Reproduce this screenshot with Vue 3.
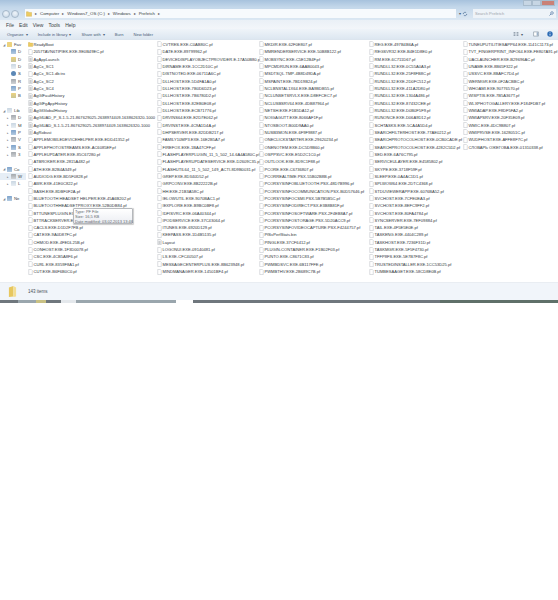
<script setup>
// the sidebar is cut narrow in this window, only the first letters show
const sidebarGroups = [
  [
    { name: 'Fav', icon: 'star', head: true },
    { name: 'D', icon: 'blue' },
    { name: 'D', icon: 'yellow' },
    { name: 'D', icon: 'pale' },
    { name: 'S', icon: 'cloud' },
    { name: 'R', icon: 'gray' },
    { name: 'P', icon: 'blue' },
    { name: 'B', icon: 'yellow' },
  ],
  [
    { name: 'Lib', icon: 'pale', head: true },
    { name: 'D', icon: 'gray', sub: true },
    { name: 'M', icon: 'pale', sub: true },
    { name: 'P', icon: 'blue', sub: true },
    { name: 'V', icon: 'gray', sub: true },
    { name: 'S', icon: 'blue', sub: true },
    { name: '3', icon: 'gray', sub: true },
  ],
  [
    { name: 'Co', icon: 'blue', head: true },
    { name: 'W', icon: 'gray', sub: true, selected: true },
    { name: 'L', icon: 'pale', sub: true },
  ],
  [{ name: 'Ne', icon: 'blue', head: true }],
]

const folders = ['ReadyBoot']
const dataFiles = [
  'AgAppLaunch', 'AgCx_SC1', 'AgCx_SC2', 'AgCx_SC4', 'AgGlFaultHistory', 'AgGlFgAppHistory', 'AgGlGlobalHistory',
  'AgGlUAD_P_S-1-5-21-867629025-2638974409-1638626320-1000', 'AgGlUAD_S-1-5-21-867629025-2638974409-1638626320-1000',
  'AgRobust', 'Layout',
]

const names = [
  'ReadyBoot', '2057TAVN6TIPIEK.EXE-9E0B49EC.pf', 'AgAppLaunch', 'AgCx_SC1', 'AgCx_SC1.db.trx', 'AgCx_SC2', 'AgCx_SC4',
  'AgGlFaultHistory', 'AgGlFgAppHistory', 'AgGlGlobalHistory',
  'AgGlUAD_P_S-1-5-21-867629025-2638974409-1638626320-1000', 'AgGlUAD_S-1-5-21-867629025-2638974409-1638626320-1000',
  'AgRobust', 'APPLEMOBILEDEVICEHELPER.EXE-EDD41352.pf', 'APPLEPHOTOSTREAMS.EXE-AC6085EF.pf',
  'APPLEUPDATER.EXE-85C67280.pf', 'ATBROKER.EXE-2815A482.pf', 'ATH.EXE-B2B4A349.pf', 'AUDIODG.EXE-BD5F0828.pf',
  'AWK.EXE-41E0C822.pf', 'BASH.EXE-8DBF0F2A.pf', 'BLUETOOTH HEADSET HELPER.EXE-45A6B202.pf',
  'BLUETOOTHHEADSETPROXY.EXE-52B0DB84.pf', 'BTTUNESPLUGIN.EX', 'BTTRACKSERVER.EX',
  'CACLS.EXE-D1D2F7FB.pf', 'CAT.EXE-9A0D87FC.pf', 'CHMOD.EXE-4FEDL25B.pf', 'CONHOST.EXE-1F3D0078.pf',
  'CSC.EXE-4CB5A8F6.pf', 'CURL.EXE-8359F8A1.pf', 'CUT.EXE-B6F6B0C0.pf',

  'CVTRES.EXE-C0AB80C.pf', 'DATE.EXE-89799962.pf', 'DEVICEDISPLAYOBJECTPROVIDER.E-17A50B80.pf',
  'DIRNAME.EXE-1CC2D10C.pf', 'DISTNOTED.EXE-06711A6C.pf', 'DLLHOST.EXE-5D4FA1A0.pf', 'DLLHOST.EXE-7B0D6D23.pf',
  'DLLHOST.EXE-7B6780D2.pf', 'DLLHOST.EXE-82EB0E08.pf', 'DLLHOST.EXE-ECB71776.pf', 'DRVINS64.EXE-E2D7E062.pf',
  'DRVINST.EXE-4C9A1D4A.pf', 'DHPSERVER.EXE-82DDB217.pf', 'FAMILY10MP3.EXE-16E2B5A7.pf', 'FIREFOX.EXE-1BA47CFF.pf',
  'FLASHPLAYERPLUGIN_11_5_502_14-6A4A580C.pf', 'FLASHPLAYERUPDATESERVICE.EXE-D2609C35.pf',
  'FLASHUTIL64_11_5_502_149_ACTI-8D9B0031.pf', 'GREP.EXE-8D340D52.pf', 'GRPCONV.EXE-8B22222B.pf', 'HH.EXE-21B3A58C.pf',
  'IELOWUTIL.EXE-9070BAC1.pf', 'IEXPLORE.EXE-B9BC0BF8.pf', 'IDFISVRC.EXE-06A40344.pf', 'IPODSERVICE.EXE-37C43064.pf',
  'ITUNES.EXE-6920D129.pf', 'KEEPASS.EXE-1D4B5135.pf', 'Layout', 'LOGONUI.EXE-09140481.pf', 'LS.EXE-CFC40507.pf',
  'MESSAGECENTERPLUS.EXE-8B623948.pf', 'MINDMANAGER.EXE-14501BF4.pf',

  'MKDIR.EXE-62F0E807.pf', 'MMRENDERSERVICE.EXE-50B8B122.pf', 'MOBSYNC.EXE-C5E12B4F.pf', 'MPCMDRUN.EXE-6AAB0043.pf',
  'MSDTSQL.TMP-4B8D49DA.pf', 'MSPAINT.EXE-7BD19B24.pf', 'NCLBNSTAL1X64.EXE-BA9BDB55.pf', 'NCLUNSETSRVLX.EXE-D8EFCEC7.pf',
  'NCLUSBSRV64.EXE-4DB87964.pf', 'NETSH.EXE-F1B5DA12.pf', 'NOIGAGUTT.EXE-8066AF1F.pf', 'NTOSBOOT-B00D9AA0.pf',
  'NUSB3MON.EXE-6F9F9887.pf', 'ONECLICKSTARTER.EXE-29620234.pf', 'ONENOTEM.EXE-DC5D9B60.pf', 'OSPPSVC.EXE-E5D2C1C0.pf',
  'OUTLOOK.EXE-8D9C1F88.pf', 'PCORE.EXE-C6736807.pf', 'PCORREALTIME.PSX-55B02B8B.pf',
  'PCORSYSINFOBLUETOOTH.PSX-48D7B996.pf', 'PCORSYSINFOCOMMUNICATION.PSX-B0D57646.pf', 'PCORSYSINFOCSMI.PSX-5B7B5B5C.pf',
  'PCORSYSINFODIRECT.PSX-E3B8B81F.pf', 'PCORSYSINFOSOFTWARE.PSX-2F4EB8A7.pf', 'PCORSYSINFOSTORAGE.PSX-5D20ACC9.pf',
  'PCORSYSINFOVIDEOCAPTURE.PSX-F4244757.pf', 'PfSvPerfStats.bin', 'PINGLEXE-37CF6412.pf',
  'PLUGIN-CONTAINER.EXE-F1B02F03.pf', 'PUNTO.EXE-C8671C83.pf', 'PWMBDSVC.EXE-6B117FFE.pf', 'PWMBTHV.EXE-2B689C7B.pf',

  'REG.EXE-497B4B6A.pf', 'REGSVR32.EXE-B4E1D8E0.pf', 'RM.EXE-6C711D67.pf', 'RUNDLL32.EXE-0C55A0A3.pf',
  'RUNDLL32.EXE-25F8FB8C.pf', 'RUNDLL32.EXE-2D0FC512.pf', 'RUNDLL32.EXE-411A2D80.pf', 'RUNDLL32.EXE-1304A486.pf',
  'RUNDLL32.EXE-87432CEE.pf', 'RUNDLL32.EXE-D0B0F5F9.pf', 'RUNONCE.EXE-D06A9D12.pf', 'SCHTASKS.EXE-5CA4A5D4.pf',
  'SEARCHFILTERHOST.EXE-77AE0212.pf', 'SEARCHPROTOCOLHOST.EXE-0CB0CADE.pf', 'SEARCHPROTOCOLHOST.EXE-4282C5D2.pf',
  'SED.EXE-6A76C795.pf', 'SERVICEULAYER.EXE-E4585802.pf', 'SKYPE.EXE-3718F59F.pf', 'SLEEP.EXE-0A4AC1D1.pf',
  'SPLWOW64.EXE-2DTC4368.pf', 'STDUVIEWERAPP.EXE-6076BA52.pf', 'SVCHOST.EXE-7CFE0EA3.pf', 'SVCHOST.EXE-8EFC9FF2.pf',
  'SVCHOST.EXE-80FA4784.pf', 'SYNCSERVER.EXE-7EF09884.pf', 'TAIL.EXE-4F5E5E0E.pf', 'TASKENG.EXE-4404C289.pf',
  'TASKHOST.EXE-7236F31D.pf', 'TASKMGR.EXE-5F5F4730.pf', 'TFFP8FS.EXE-5E7B7F8C.pf',
  'TRUSTEDINSTALLER.EXE-1CC53D25.pf', 'TUMBESAAGET.EXE-58CD8E0B.pf',

  'TUNEUPUTILITIESAPP64.EXE-1141C1173.pf', 'TVT_FINGERPRINT_INFO64.EXE-FE807A91.pf', 'UACLAUNCHER.EXE-B29696AC.pf',
  'UNAME.EXE-8B65F322.pf', 'USSVC.EXE-8BAFC7D4.pf', 'WERMGR.EXE-0F2ACBBC.pf', 'WHOAMI.EXE-90776570.pf',
  'WISPTIS.EXE-7B5A367T.pf', 'WLXPHOTOGALLERY.EXE-F184FDB7.pf', 'WMIADAP.EXE-F8DF5FA2.pf', 'WMIAPSRV.EXE-20F35E09.pf',
  'WMIC.EXE-4DC9B807.pf', 'WMIPRVSE.EXE-1628051C.pf', 'WUDFHOST.EXE-AFFE8F7C.pf', 'СЛОВАРЬ ОЖЕГОВА.EXE-01310338.pf',
]

const iconFor = (name) => {
  if (folders.includes(name)) return '#ic-folder'
  if (dataFiles.includes(name)) return '#ic-data'
  return '#ic-file'
}

const crumbs = ['Computer', 'Windows7_OS (C:)', 'Windows', 'Prefetch']
const menus = ['File', 'Edit', 'View', 'Tools', 'Help']
const actions = [
  { label: 'Organize', arrow: true },
  { label: 'Include in library', arrow: true },
  { label: 'Share with', arrow: true },
  { label: 'Burn' },
  { label: 'New folder' },
]
</script>

<template>
  <div class="explorer">
    <svg class="defs" width="0" height="0" aria-hidden="true">
      <symbol id="ic-file" viewBox="0 0 10 12">
        <path d="M1.5.8h5l2 2v8.4h-7z" fill="#fff" stroke="#b6bac0" />
      </symbol>
      <symbol id="ic-data" viewBox="0 0 10 12">
        <path d="M1.5.8h5l2 2v8.4h-7z" fill="#f4f5f6" stroke="#b0b4b9" />
        <path d="M3 5h4M3 7h4M3 9h4" stroke="#a2a7ab" />
      </symbol>
      <symbol id="ic-folder" viewBox="0 0 10 12">
        <path d="M.5 3h3.4l1 1.2h4.6v6.6H.5z" fill="#eccb62" stroke="#c9a545" stroke-width=".6" />
      </symbol>
    </svg>

    <div class="titlebar">
      <div class="window-btns">
        <span class="wbtn"></span>
        <span class="wbtn"></span>
        <span class="wbtn close"></span>
      </div>
    </div>

    <div class="addressrow">
      <div class="nav">
        <span class="nav-btn"></span>
        <span class="nav-btn"></span>
      </div>
      <div class="address">
        <svg class="addr-icon" viewBox="0 0 10 12"><use href="#ic-folder" /></svg>
        <template v-for="c in crumbs" :key="c">
          <span class="sep">▸</span>
          <span class="crumb">{{ c }}</span>
        </template>
        <span class="sep">▸</span>
      </div>
      <div class="refresh">
        <span class="dd">▾</span>
        <svg viewBox="0 0 10 10" width="6" height="6">
          <path d="M2 5a3 3 0 0 1 5-2M8 5a3 3 0 0 1-5 2" fill="none" stroke="#4b6d92" stroke-width="1.2" />
        </svg>
      </div>
      <div class="search">
        <span>Search Prefetch</span>
        <svg viewBox="0 0 10 10" width="5" height="5">
          <circle cx="6" cy="4" r="2.6" fill="none" stroke="#3f6a9b" stroke-width="1.2" />
          <path d="M4 6L1 9" stroke="#3f6a9b" stroke-width="1.4" />
        </svg>
      </div>
    </div>

    <div class="menubar">
      <span v-for="m in menus" :key="m">{{ m }}</span>
    </div>

    <div class="toolbar">
      <span v-for="a in actions" :key="a.label" class="action">
        {{ a.label }}<i v-if="a.arrow">▾</i>
      </span>
      <div class="tool-icons">
        <svg viewBox="0 0 10 10" width="6" height="6">
          <path d="M1 2h3v2H1zM6 2h3v2H6zM1 6h3v2H1zM6 6h3v2H6z" fill="#7d8b99" />
        </svg>
        <span class="dd">▾</span>
        <svg class="pane" viewBox="0 0 10 10" width="6" height="6">
          <path d="M1 1.5h8v7H1z" fill="#fff" stroke="#7d8b99" />
          <path d="M6 2h2.500v6H6z" fill="#9db3c9" />
        </svg>
        <svg viewBox="0 0 10 10" width="6" height="6">
          <circle cx="5" cy="5" r="4.500" fill="#2d6cb5" />
          <path d="M5 4.500v3M5 2.200v1" stroke="#fff" stroke-width="1.300" />
        </svg>
      </div>
    </div>

    <div class="main">
      <nav class="sidebar">
        <ul v-for="(group, g) in sidebarGroups" :key="g" class="side-group">
          <li
            v-for="(item, i) in group"
            :key="i"
            class="side-item"
            :class="{ head: item.head, sub: item.sub, selected: item.selected }"
          >
            <i v-if="item.head || item.sub" class="chev">{{ item.head ? '◢' : '▸' }}</i>
            <b class="side-icon" :class="item.icon"></b>
            <span>{{ item.name }}</span>
          </li>
        </ul>
      </nav>

      <div class="files">
        <div v-for="n in names" :key="n" class="file">
          <svg class="file-icon" viewBox="0 0 10 12"><use :href="iconFor(n)" /></svg>
          <span>{{ n }}</span>
        </div>
      </div>

      <div class="tooltip">
        <div>Type: PF File</div>
        <div>Size: 16,5 KB</div>
        <div>Date modified: 03.02.2013 13:46</div>
      </div>
    </div>

    <div class="statusbar">
      <svg class="status-folder" viewBox="0 0 10 14">
        <path d="M1 2.500L6 1v11.500L1 13z" fill="#e7c75f" />
        <path d="M6 1l3 1.500v10l-3 .5z" fill="#f3de94" />
      </svg>
      <span>143 items</span>
    </div>

    <div class="taskbar">
      <i class="t1"></i><i class="t2"></i><i class="t3"></i><i class="t1 w1"></i><i class="t4"></i><i class="t2 w2"></i>
      <i class="t5"></i><i class="t1 grow"></i><i class="t6"></i>
    </div>
  </div>
</template>

<style scoped>
.explorer {
  width: 558px;
  font-family: "Liberation Sans", Arial, sans-serif;
  color: #3a3f45;
  background: #fff;
}

.defs {
  position: absolute;
}

.titlebar {
  height: 7px;
  display: flex;
  justify-content: flex-end;
  background: linear-gradient(#a7c2dd, #c3d7ea);
}

.window-btns {
  display: flex;
  margin-right: 3px;
}

.wbtn {
  width: 9px;
  height: 6px;
  background: #c7d6e4;
  border: 0.5px solid #a9bccd;
  box-sizing: border-box;
}

.wbtn.close {
  width: 14px;
  background: #c98177;
}

.addressrow {
  height: 13px;
  display: flex;
  align-items: center;
  background: linear-gradient(#c3d7ea, #dce8f3);
  font-size: 4.400px;
}

.nav {
  display: flex;
  gap: 1px;
  width: 25px;
  padding-left: 2px;
  box-sizing: border-box;
}

.nav-btn {
  width: 8px;
  height: 8px;
  border-radius: 50%;
  border: 0.6px solid #a5b8ca;
  box-sizing: border-box;
  background: radial-gradient(circle at 50% 35%, #eef4fa, #c8d7e5);
}

.address {
  width: 431px;
  height: 9px;
  display: flex;
  align-items: center;
  gap: 3px;
  padding-left: 1px;
  box-sizing: border-box;
  background: #f7fafd;
}

.addr-icon {
  width: 6px;
  height: 7px;
}

.sep {
  font-size: 3.500px;
  color: #555;
}

.refresh {
  width: 17px;
  display: flex;
  align-items: center;
  gap: 1px;
  padding-left: 3px;
  box-sizing: border-box;
}

.dd {
  font-size: 4px;
  color: #4c5a68;
}

.search {
  width: 83px;
  height: 9px;
  display: flex;
  align-items: center;
  justify-content: space-between;
  padding: 0 2px;
  box-sizing: border-box;
  background: #eef3f8;
  color: #a0a6ad;
  font-size: 4.100px;
}

.menubar {
  height: 9px;
  display: flex;
  align-items: center;
  gap: 5px;
  padding-left: 6px;
  background: linear-gradient(#eaf0f6, #f3f6fa);
  font-size: 5px;
}

.toolbar {
  height: 11px;
  display: flex;
  align-items: center;
  gap: 10px;
  padding-left: 7px;
  background: linear-gradient(#eff4f9, #dde7f1);
  border-bottom: 0.5px solid #dce5ee;
  box-sizing: border-box;
  font-size: 4.100px;
  color: #4a6079;
}

.action i {
  font-style: normal;
  font-size: 3.500px;
  margin-left: 2px;
}

.tool-icons {
  margin-left: auto;
  display: flex;
  align-items: center;
  gap: 2px;
  padding-right: 5px;
}

.pane {
  margin: 0 6px 0 8px;
}

.main {
  position: relative;
  display: flex;
  height: 242px;
  overflow: hidden;
}

.sidebar {
  width: 26px;
  flex: none;
  padding-top: 1px;
  box-sizing: border-box;
}

.side-group {
  list-style: none;
  margin: 0 0 7.330px;
  padding: 0;
}

.side-item {
  height: 7.330px;
  display: flex;
  align-items: center;
  padding-left: 11px;
  font-size: 4.300px;
  white-space: nowrap;
}

.side-item.head {
  padding-left: 3px;
}

.side-item.sub {
  padding-left: 7px;
}

.side-item.selected {
  background: #e6eef6;
}

.chev {
  width: 4px;
  flex: none;
  font-style: normal;
  font-size: 3px;
  color: #7a838b;
}

.side-icon {
  width: 5px;
  height: 5px;
  flex: none;
  margin-right: 2px;
  border-radius: 0.5px;
}

.side-icon.star {
  background: #ecd27e;
}

.side-icon.blue {
  background: linear-gradient(#7ea3cb, #b4cbe1);
}

.side-icon.yellow {
  background: linear-gradient(#ecd27e, #c9c596);
}

.side-icon.pale {
  background: linear-gradient(#c9d6e2, #e8eef3);
}

.side-icon.cloud {
  background: #5c88b6;
  border-radius: 50%;
}

.side-icon.gray {
  background: linear-gradient(#a3a8ad, #d0d3d6);
}

.files {
  flex: 1;
  display: grid;
  grid-auto-flow: column;
  grid-template-rows: repeat(32, 7.330px);
  grid-template-columns: 129px 102px 110px 94px 1fr;
  padding: 0.800px 0 0 2px;
  font-size: 4.100px;
  color: #33383e;
}

.file {
  display: flex;
  align-items: center;
  gap: 0.500px;
  white-space: nowrap;
}

.file-icon {
  width: 5px;
  height: 6px;
  flex: none;
}

.tooltip {
  position: absolute;
  left: 73px;
  top: 168px;
  width: 60px;
  height: 16px;
  padding: 0 1px;
  box-sizing: border-box;
  border: 0.5px solid #b5b8bc;
  border-radius: 1px;
  background: linear-gradient(#fff, #eceef3);
  box-shadow: 0.5px 0.5px 1px rgba(0, 0, 0, 0.2);
  font-size: 4px;
  line-height: 5.200px;
  color: #63686f;
  white-space: nowrap;
}

.statusbar {
  height: 18px;
  display: flex;
  align-items: center;
  gap: 11px;
  padding-left: 8px;
  background: #f1f5fa;
  border-top: 1px solid #e9edf2;
  box-sizing: border-box;
  font-size: 4.500px;
  color: #4a4f55;
}

.status-folder {
  width: 9px;
  height: 13px;
}

.taskbar {
  height: 3px;
  display: flex;
}

.taskbar i {
  display: block;
  width: 18px;
}

.t1 { background: #6f777d; }
.t2 { background: #9aa6ad; }
.t3 { background: #c9c184; width: 10px !important; }
.t4 { background: #e4e8ec; width: 15px !important; }
.t5 { background: #fff; width: 17px !important; }
.t6 { background: #5f7069; width: 118px !important; }
.w1 { width: 15px !important; }
.w2 { width: 100px !important; }
.taskbar .grow { flex: 1; }
</style>

<style>
body {
  background: #fff;
}
</style>
